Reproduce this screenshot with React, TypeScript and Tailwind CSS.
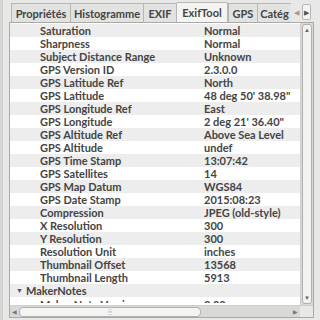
const rows: [string, string][] = [
  ["Saturation", "Normal"],
  ["Sharpness", "Normal"],
  ["Subject Distance Range", "Unknown"],
  ["GPS Version ID", "2.3.0.0"],
  ["GPS Latitude Ref", "North"],
  ["GPS Latitude", "48 deg 50' 38.98\""],
  ["GPS Longitude Ref", "East"],
  ["GPS Longitude", "2 deg 21' 36.40\""],
  ["GPS Altitude Ref", "Above Sea Level"],
  ["GPS Altitude", "undef"],
  ["GPS Time Stamp", "13:07:42"],
  ["GPS Satellites", "14"],
  ["GPS Map Datum", "WGS84"],
  ["GPS Date Stamp", "2015:08:23"],
  ["Compression", "JPEG (old-style)"],
  ["X Resolution", "300"],
  ["Y Resolution", "300"],
  ["Resolution Unit", "inches"],
  ["Thumbnail Offset", "13568"],
  ["Thumbnail Length", "5913"],
];

const tabs = [
  { label: "Propriétés", w: "w-[59px]" },
  { label: "Histogramme", w: "w-[73px]" },
  { label: "EXIF", w: "w-[33px]" },
  { label: "ExifTool", w: "w-[52px]", active: true },
  { label: "GPS", w: "w-[29px]" },
  { label: "Catég", w: "w-[34px]" },
];

function Row({ k, v, i }: { k: string; v: string; i: number }) {
  return (
    <div className={`flex h-[13px] shrink-0 items-center ${i % 2 === 0 ? "bg-[#ededed]" : "bg-white"}`}>
      <div className="w-[194px] shrink-0 pl-[30px] whitespace-nowrap">{k}</div>
      <div className="whitespace-nowrap">{v}</div>
    </div>
  );
}

export default function App() {
  return (
    <div className="flex h-[320px] w-[320px] overflow-hidden bg-[#e8e8e7] text-[11px] leading-none text-[#444] [font-family:Lato,'Liberation_Sans',sans-serif]">
      <div className="w-[3px] shrink-0 border-r border-[#cdcdcb] bg-[#d8d8d6]" />
      <div className="flex min-w-0 flex-1 flex-col">
        {/* Tab bar */}
        <div className="flex h-[22px] shrink-0 items-end pl-[8px]">
          {tabs.map((t) => (
            <div
              key={t.label}
              className={`flex shrink-0 items-center justify-center overflow-hidden whitespace-nowrap border-l border-t border-[#b6b6b4] px-[4px] font-bold ${t.w} ${
                t.active ? "h-[20px] rounded-t-[2px] border-r bg-[#f4f4f3]" : "h-[19px] bg-[#e2e2e0]"
              }`}
            >
              {t.label}
            </div>
          ))}
          <div className="mb-[2px] flex h-[16px] items-center gap-[3px] pl-[3px] text-[7px] text-[#9a9a9a]">
            <span>◀</span>
            <span className="flex h-[16px] w-[9px] items-center justify-center rounded-[2px] border border-[#b6b6b4] bg-[#f4f4f3] text-[#555]">▶</span>
          </div>
        </div>

        {/* Frame */}
        <div className="ml-[6px] mr-[6px] flex h-[296px] flex-col border border-[#a9a9a7] bg-white">
          <div className="flex min-h-0 flex-1">
            <div className="flex min-w-0 flex-1 flex-col overflow-hidden pt-[1px] font-bold">
              {rows.map(([k, v], i) => (
                <Row key={k} k={k} v={v} i={i} />
              ))}
              <div className="flex h-[13px] shrink-0 items-center bg-[#ededed]">
                <span className="w-[16px] pl-[6px] text-[7px] text-[#555]">▼</span>
                <span>MakerNotes</span>
              </div>
              <div className="flex h-[6px] shrink-0 items-start overflow-hidden bg-white pt-[2px]">
                <div className="w-[194px] shrink-0 pl-[30px] whitespace-nowrap">Maker Note Version</div>
                <div>2.00</div>
              </div>
            </div>
            {/* Vertical scrollbar */}
            <div className="flex w-[13px] shrink-0 border-l border-[#cfcfcd] bg-[#d9d9d7] p-[1px]">
              <div className="flex flex-1 flex-col items-center justify-between rounded-[3px] border border-[#b0b0ae] bg-[#f2f2f1] py-[2px] text-[6px] text-[#666]">
                <span>▲</span>
                <span>▼</span>
              </div>
            </div>
          </div>
          {/* Horizontal scrollbar */}
          <div className="flex h-[12px] shrink-0 border-t border-[#cfcfcd] bg-[#d9d9d7]">
            <div className="flex flex-1 items-center px-[2px] text-[6px] text-[#777]">
              <span>◀</span>
              <div className="ml-[2px] flex h-[10px] w-[182px] items-center justify-center rounded-[4px] border border-[#b0b0ae] bg-[#f4f4f3] text-[6px] text-[#999]">
                ⁞⁞⁞
              </div>
              <span className="ml-auto">▶</span>
            </div>
            <div className="w-[13px] shrink-0 bg-[#e8e8e7]" />
          </div>
        </div>
      </div>
    </div>
  );
}
